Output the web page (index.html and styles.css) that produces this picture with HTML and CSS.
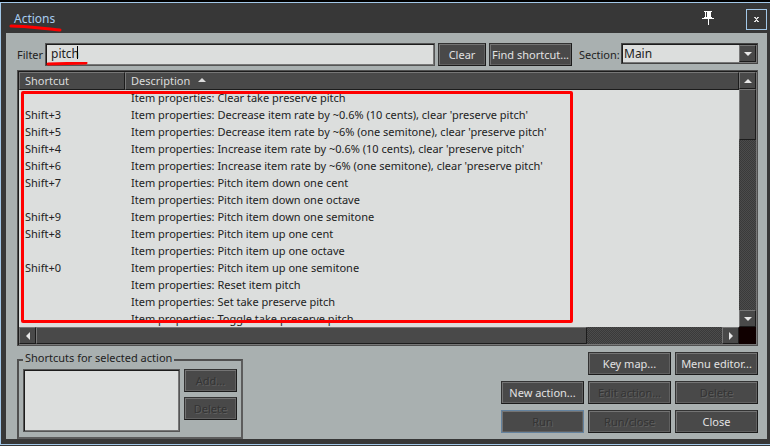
FILE: index.html
```
<!DOCTYPE html>
<html lang="en">
<head>
<meta charset="UTF-8">
<title>Actions</title>
<link rel="stylesheet" href="styles.css">
</head>
<body>
<div class="window">
  <header class="titlebar">
    <h1>Actions</h1>
    <svg class="mark mark-title" width="54" height="8" viewBox="0 0 54 8"><path d="M2 2C18 2 36 5 51 6"/></svg>
    <button class="pin" type="button" aria-label="Pin">
      <svg width="12" height="14" viewBox="0 0 12 14" shape-rendering="crispEdges">
        <path fill="#fff" d="M2 0h8v1H9v5h1v1h2v1H7v6H6V8H0V7h2V6h1V1H2z"/>
        <path fill="#373737" d="M4 1h1v5H4z"/>
      </svg>
    </button>
    <button class="close" type="button" aria-label="Close window">
      <svg width="5" height="5" viewBox="0 0 5 5" shape-rendering="crispEdges"><path fill="#ddd" d="M0 0h2v1h1V0h2v1H4v1H3v1h1v1h1v1H3V4H2v1H0V4h1V3h1V2H1V1H0z"/></svg>
    </button>
  </header>

  <main class="content">
    <div class="filter-row">
      <label class="filter-label" for="filter">Filter</label>
      <div class="filter-box">
        <input type="text" id="filter" value="pitch">
        <span class="caret"></span>
        <svg class="mark mark-filter" width="42" height="4" viewBox="0 0 42 4"><path d="M2 2L40 1"/></svg>
      </div>
      <button class="btn clear" type="button">Clear</button>
      <button class="btn find" type="button">Find shortcut...</button>
      <label class="section-label" for="section">Section:</label>
      <div class="combo">
        <select id="section"><option>Main</option></select>
        <span class="arrow-btn"><svg width="8" height="4" viewBox="0 0 8 4"><path d="M0 0h8L4 4z"/></svg></span>
      </div>
    </div>

    <div class="list">
      <div class="rows">
        <table>
          <thead>
            <tr><th class="col-key">Shortcut</th><th>Description <svg class="sort" width="8" height="4" viewBox="0 0 8 4"><path d="M0 4h8L4 0z"/></svg></th></tr>
          </thead>
          <tbody>
            <tr><td></td><td>Item properties: Clear take preserve pitch</td></tr>
            <tr><td>Shift+3</td><td>Item properties: Decrease item rate by ~0.6% (10 cents), clear 'preserve pitch'</td></tr>
            <tr><td>Shift+5</td><td>Item properties: Decrease item rate by ~6% (one semitone), clear 'preserve pitch'</td></tr>
            <tr><td>Shift+4</td><td>Item properties: Increase item rate by ~0.6% (10 cents), clear 'preserve pitch'</td></tr>
            <tr><td>Shift+6</td><td>Item properties: Increase item rate by ~6% (one semitone), clear 'preserve pitch'</td></tr>
            <tr><td>Shift+7</td><td>Item properties: Pitch item down one cent</td></tr>
            <tr><td></td><td>Item properties: Pitch item down one octave</td></tr>
            <tr><td>Shift+9</td><td>Item properties: Pitch item down one semitone</td></tr>
            <tr><td>Shift+8</td><td>Item properties: Pitch item up one cent</td></tr>
            <tr><td></td><td>Item properties: Pitch item up one octave</td></tr>
            <tr><td>Shift+0</td><td>Item properties: Pitch item up one semitone</td></tr>
            <tr><td></td><td>Item properties: Reset item pitch</td></tr>
            <tr><td></td><td>Item properties: Set take preserve pitch</td></tr>
            <tr><td></td><td>Item properties: Toggle take preserve pitch</td></tr>
          </tbody>
        </table>
        <div class="mark-box"></div>
      </div>
      <div class="vscroll">
        <span class="arrow-btn"><svg width="8" height="4" viewBox="0 0 8 4"><path d="M0 4h8L4 0z"/></svg></span>
        <span class="thumb"></span>
        <span class="arrow-btn end"><svg width="8" height="4" viewBox="0 0 8 4"><path d="M0 0h8L4 4z"/></svg></span>
      </div>
      <div class="hscroll">
        <span class="arrow-btn"><svg width="4" height="8" viewBox="0 0 4 8"><path d="M4 0v8L0 4z"/></svg></span>
        <span class="thumb"></span>
        <span class="arrow-btn end"><svg width="4" height="8" viewBox="0 0 4 8"><path d="M0 0v8L4 4z"/></svg></span>
      </div>
      <div class="corner"></div>
    </div>

    <div class="bottom">
      <fieldset class="group">
        <legend>Shortcuts for selected action</legend>
        <div class="group-body">
          <select class="keys" size="3" aria-label="Shortcuts for selected action"></select>
          <div class="group-buttons">
            <button class="btn" type="button" disabled>Add...</button>
            <button class="btn" type="button" disabled>Delete</button>
          </div>
        </div>
      </fieldset>
      <div class="commands">
        <button class="btn second" type="button">Key map...</button>
        <button class="btn" type="button">Menu editor...</button>
        <button class="btn" type="button">New action...</button>
        <button class="btn" type="button" disabled>Edit action...</button>
        <button class="btn" type="button" disabled>Delete</button>
        <button class="btn default" type="button" disabled>Run</button>
        <button class="btn" type="button" disabled>Run/close</button>
        <button class="btn" type="button">Close</button>
      </div>
    </div>
  </main>
</div>
</body>
</html>
```
FILE: styles.css
```
* {
  box-sizing: border-box;
}

body {
  margin: 0;
  background-color: #373737;
  font: 11px/17px "Noto Sans", "Open Sans", sans-serif;
  color: #222;
}

button, input, select {
  font: inherit;
  margin: 0;
}

svg {
  display: block;
}

.window {
  display: flex;
  flex-direction: column;
  height: 100vh;
  min-height: 400px;
  border-top: 2px solid #000;
  border-bottom: 1px solid #373737;
  box-shadow: inset 1px 1px #a3c8e8, inset 0 -1px #a3c8e8;
  padding: 1px 3px 6px 6px;
}

/* title bar */
.titlebar {
  position: relative;
  display: flex;
  align-items: center;
  height: 30px;
  padding-left: 8px;
}

.titlebar h1 {
  flex: 1;
  margin: 0;
  font-size: 12px;
  font-weight: normal;
  color: #a8cdf0;
}

.pin {
  padding: 0;
  margin-right: 32px;
  border: none;
  background: none;
}

.close {
  display: flex;
  align-items: center;
  justify-content: center;
  width: 21px;
  height: 21px;
  margin-top: 3px;
  padding: 0;
  border: 1px solid #a3c8e8;
  background-color: #373737;
}

/* red marker strokes */
.mark {
  position: absolute;
  fill: none;
  stroke: #f00;
  stroke-width: 3;
  stroke-linecap: round;
}

.mark-title {
  left: 3px;
  top: 21px;
}

.mark-filter {
  left: 1px;
  top: 19px;
}

.mark-box {
  position: absolute;
  left: 2px;
  top: 19px;
  bottom: 4px;
  width: 552px;
  border: 3px solid #f00;
  border-radius: 2px;
}

.content {
  flex: 1;
  display: flex;
  flex-direction: column;
  min-height: 0;
  padding: 10px 9px 0 11px;
  background-color: #a9b0b0;
}

/* filter row */
.filter-row {
  display: flex;
  align-items: flex-start;
  margin-bottom: 4px;
}

.filter-label {
  width: 28px;
  padding-top: 3px;
}

.filter-box {
  position: relative;
  flex: 1;
  margin-right: 3px;
}

.filter-box input {
  display: block;
  width: 100%;
  height: 23px;
  padding: 0 5px 3px;
  border: 1px solid #555;
  box-shadow: inset 1px 1px #1c1c1c, inset -1px -1px #777;
  background-color: #dcdedd;
  color: #222;
  font-size: 12px;
  outline: none;
}

.caret {
  position: absolute;
  left: 32px;
  top: 3px;
  width: 1px;
  height: 13px;
  background-color: #000;
}

.btn {
  height: 23px;
  padding: 0;
  border: 1px solid;
  border-color: #333 #1b1b1b #1b1b1b #333;
  box-shadow: inset 1px 1px #747474, inset -1px -1px #606060;
  background-color: #494949;
  color: #e2e2e2;
  line-height: 19px;
  white-space: nowrap;
}

.btn:disabled {
  color: #343434;
  text-shadow: 1px 1px #606060;
}

.btn.default {
  border-color: #64829e;
}

.clear {
  width: 48px;
  margin-right: 3px;
}

.find {
  width: 83px;
  margin-right: 7px;
}

.section-label {
  width: 42px;
  padding-top: 3px;
  white-space: nowrap;
}

.combo {
  position: relative;
  width: 137px;
}

.combo select {
  appearance: none;
  display: block;
  width: 100%;
  height: 21px;
  padding: 0 20px 0 2px;
  border: 1px solid #444;
  border-radius: 0;
  box-shadow: inset 1px 1px #1c1c1c, inset -1px -1px #777;
  background-color: #dcdedd;
  color: #222;
  font-size: 12px;
}

.combo .arrow-btn {
  position: absolute;
  right: 2px;
  top: 2px;
  pointer-events: none;
}

.arrow-btn {
  display: flex;
  flex: none;
  align-items: center;
  justify-content: center;
  width: 17px;
  height: 17px;
  border: 1px solid;
  border-color: #777 #1c1c1c #1c1c1c #777;
  background-color: #494949;
  fill: #e8e8e8;
}

/* action list */
.list {
  flex: 1;
  display: grid;
  grid-template-columns: 1fr 17px;
  grid-template-rows: 1fr 17px;
  min-height: 0;
  border: 1px solid #505050;
  box-shadow: inset 1px 1px #1c1c1c, inset -1px -1px #777;
  padding: 1px;
}

.rows {
  position: relative;
  min-height: 0;
  overflow: hidden;
  background-color: #dcdedd;
}

table {
  width: 100%;
  table-layout: fixed;
  border-collapse: separate;
  border-spacing: 0;
}

th {
  height: 18px;
  padding: 0 5px;
  border: 1px solid;
  border-color: #777 #1c1c1c #1c1c1c #777;
  background-color: #494949;
  color: #dcdcdc;
  font-weight: normal;
  line-height: 16px;
  text-align: left;
}

.col-key {
  width: 106px;
}

.sort {
  display: inline-block;
  margin: 0 0 3px 5px;
  fill: #dcdcdc;
}

td {
  height: 17px;
  padding: 0 6px;
  line-height: 15px;
  vertical-align: top;
  white-space: nowrap;
}

.vscroll, .hscroll {
  display: flex;
  background: repeating-conic-gradient(#3a3a3a 0 25%, #4c4c4c 0 50%) 0 0 / 2px 2px;
}

.vscroll {
  flex-direction: column;
}

.thumb {
  border: 1px solid;
  border-color: #777 #1c1c1c #1c1c1c #777;
  background-color: #494949;
}

.vscroll .thumb {
  height: 20%;
}

.hscroll .thumb {
  width: 76.5%;
}

.vscroll .end {
  margin-top: auto;
}

.hscroll .end {
  margin-left: auto;
}

.corner {
  background-color: #100000;
}

/* bottom area */
.bottom {
  display: flex;
  justify-content: space-between;
  align-items: flex-start;
  padding-top: 6px;
}

.group {
  width: 226px;
  min-width: 0;
  margin: 0;
  padding: 2px 4px 5px;
  border: 2px solid #505050;
  border-color: #505050 #5c5c5c #5c5c5c #505050;
}

.group legend {
  height: 15px;
  padding: 0 2px;
  line-height: 12px;
  white-space: nowrap;
}

.group-body {
  display: flex;
  gap: 4px;
}

.keys {
  appearance: none;
  width: 157px;
  height: 63px;
  border: 1px solid #555;
  border-radius: 0;
  box-shadow: inset 1px 1px #1c1c1c, inset -1px -1px #777;
  background-color: #dcdedd;
}

.group-buttons {
  flex: 1;
  display: flex;
  flex-direction: column;
  gap: 5px;
}

.commands {
  display: grid;
  grid-template-columns: repeat(3, 83px);
  gap: 6px 4px;
}

.second {
  grid-column: 2;
}
```
